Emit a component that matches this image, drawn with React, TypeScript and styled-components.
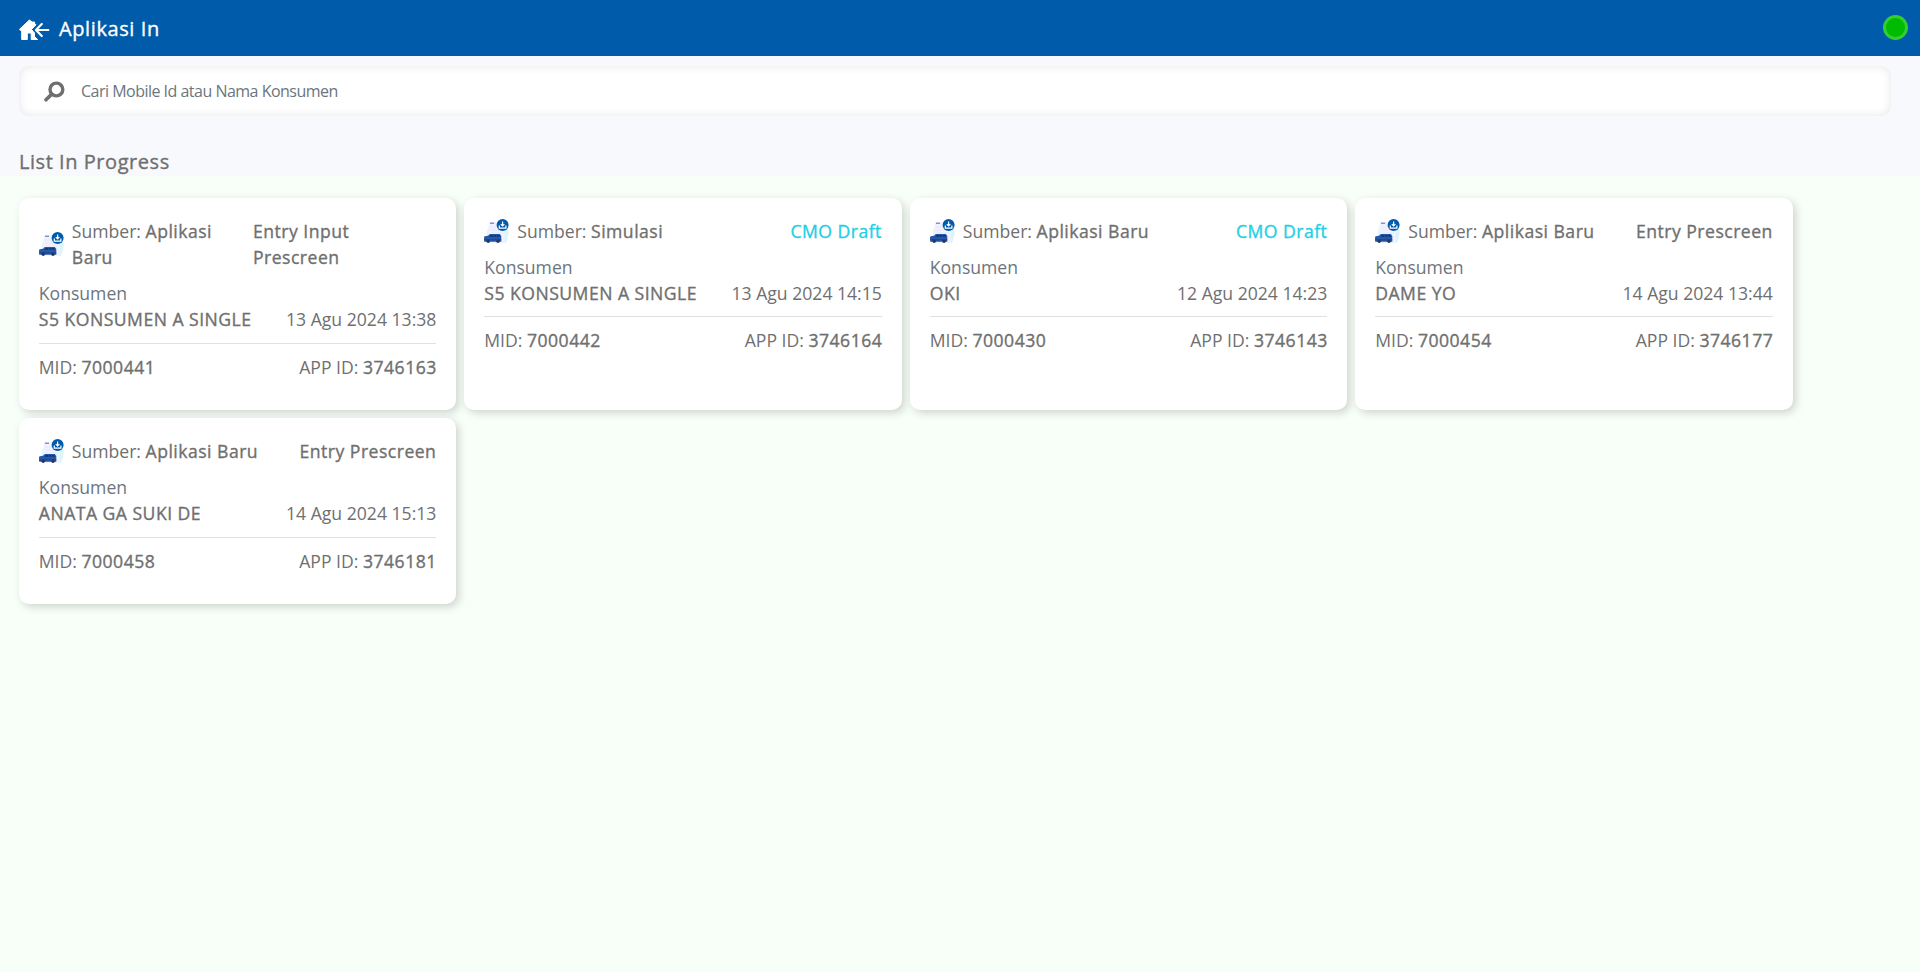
import React from 'react';
import styled, { createGlobalStyle, css } from 'styled-components';

const GlobalStyle = createGlobalStyle`
  *, *::before, *::after { box-sizing: border-box; }
  body {
    margin: 0;
    background: #f8fff8;
    color: #6f6f6f;
    font-family: 'Open Sans', sans-serif;
    font-size: 17.6px;
    line-height: 1.5;
  }
`;

const mediumWeight = css`
  font-weight: 400;
  letter-spacing: 0.48px;
  -webkit-text-stroke: 0.35px currentColor;
`;

const Header = styled.header`
  display: flex;
  align-items: center;
  height: 56px;
  padding: 0 12px 0 19px;
  background: #005bab;
  color: #fff;
`;

const HeaderTitle = styled.h1`
  flex: 1;
  margin: 2px 0 0 9px;
  font-size: 20px;
  line-height: 30px;
  ${mediumWeight}
  letter-spacing: 0.6px;
`;

const StatusDot = styled.span`
  width: 25px;
  height: 25px;
  margin-bottom: 1px;
  border: 3px solid #33cc33;
  border-radius: 50%;
  background: #00bb00;
`;

const TopSection = styled.section`
  height: 120px;
  padding: 10px 29px 0 19px;
  background: #f8f9fc;
`;

const SearchBox = styled.label`
  display: flex;
  align-items: center;
  gap: 16px;
  height: 50px;
  padding-left: 25px;
  border-radius: 10px;
  background: #fff;
  box-shadow: inset 0 0 10px rgba(0, 0, 0, 0.1);
`;

const SearchInput = styled.input`
  flex: 1;
  padding: 0;
  border: 0;
  outline: 0;
  background: transparent;
  color: #6c757d;
  font: 400 16px/24px 'Open Sans', sans-serif;
  letter-spacing: -0.51px;
  &::placeholder { color: #6c757d; opacity: 1; }
`;

const SectionTitle = styled.h2`
  margin: 31px 0 0;
  font-size: 20px;
  line-height: 30px;
  ${mediumWeight}
  letter-spacing: 0.55px;
`;

const CardGrid = styled.main`
  display: grid;
  grid-template-columns: repeat(4, 437.6px);
  gap: 8px 7.9px;
  padding: 22px 18.8px;
`;

const Card = styled.article`
  padding: 20px 20px 30.3px;
  border-radius: 10px;
  background: #fff;
  box-shadow: 3px 3px 8px rgba(0, 0, 0, 0.17);
`;

const Row = styled.div`
  display: flex;
  align-items: center;
  justify-content: space-between;
`;

const Source = styled.div`
  display: flex;
  align-items: center;
  gap: 8px;
`;

const Strong = styled.span`
  ${mediumWeight}
`;

const Status = styled.div<{ $draft: boolean }>`
  ${mediumWeight}
  color: ${({ $draft }) => ($draft ? '#1dd0e6' : 'inherit')};
`;

const Label = styled.div`
  margin-top: 9.2px;
  color: #6c757d;
`;

const Divider = styled.hr`
  margin: 10px 0 9.9px;
  border: 0;
  border-top: 1px solid #dee2e6;
`;

const AppId = styled.span`
  margin-right: -0.4px;
`;

const HomeSvg = styled.svg`
  flex-shrink: 0;
  margin-top: 4px;
`;

const SourceSvg = styled.svg`
  flex-shrink: 0;
`;

const HomeIcon = () => (
  <HomeSvg width="31" height="22" viewBox="0 0 31 22" fill="none">
    <path d="M10.4 1 0.5 10.3 1.4 11.5H2.7V20.5H8.3V14H12.2V20.5H18.6L15.5 17.5V14L12.5 10.5 17 5.7 15.6 4.6V3H13.2Z" fill="#fff" stroke="#fff" strokeWidth="1" strokeLinejoin="round" />
    <path d="M29.3 11H17.8M22.8 5 16.9 11 22.8 17" stroke="#fff" strokeWidth="2.2" strokeLinecap="round" strokeLinejoin="round" />
  </HomeSvg>
);

const SearchIcon = () => (
  <svg width="21" height="21" viewBox="0 0 21 21" fill="none" stroke="#6f6f6f">
    <circle cx="12.4" cy="8.5" r="6.4" strokeWidth="3.4" />
    <path d="M7.5 13.4 2 18.8" strokeWidth="3.6" strokeLinecap="round" />
  </svg>
);

const SourceIcon = () => (
  <SourceSvg width="25" height="25" viewBox="0 0 25 25">
    <path d="M4 9 14 3 24 9Q26 15 22 24H6Q1 17 4 9Z" fill="#dcf5fc" />
    <path d="M5 3H15L20 7 21 24H7L4 16Z" fill="#f1f2ff" />
    <path d="M6 4.2H10" stroke="#315caa" strokeWidth=".9" />
    <path d="M6 8H13M6 11H18M7 14H19" stroke="#e4e5fa" strokeWidth=".8" />
    <path d="M0 18 0.8 17.2 4 16.8 5.8 15H15.8L17.3 17V22.8L0.2 22.8Z" fill="#2558aa" />
    <path d="M5.3 17.7 6.8 15.9H9.4V17.7ZM10.2 15.9H12.4V17.7H10.2ZM13.1 15.9H15.1L16 17.7H13.1Z" fill="#14336d" />
    <path d="M0 20.8H17.3" stroke="#173f87" strokeWidth=".8" />
    <circle cx="4.2" cy="22.2" r="1.7" fill="#263858" />
    <circle cx="14" cy="22.2" r="1.7" fill="#263858" />
    <circle cx="18.6" cy="6.1" r="6" fill="#005bab" />
    <path d="M18.6 2.6V6.8M16.8 5.2 18.6 7 20.4 5.2M15.3 6.4V9.1H21.9V6.4" fill="none" stroke="#fff" strokeWidth="1.2" />
  </SourceSvg>
);

const applications = [
  { source: 'Aplikasi Baru', status: 'Entry Input Prescreen', name: 'S5 KONSUMEN A SINGLE', date: '13 Agu 2024 13:38', mid: '7000441', app: '3746163' },
  { source: 'Simulasi', status: 'CMO Draft', name: 'S5 KONSUMEN A SINGLE', date: '13 Agu 2024 14:15', mid: '7000442', app: '3746164' },
  { source: 'Aplikasi Baru', status: 'CMO Draft', name: 'OKI', date: '12 Agu 2024 14:23', mid: '7000430', app: '3746143' },
  { source: 'Aplikasi Baru', status: 'Entry Prescreen', name: 'DAME YO', date: '14 Agu 2024 13:44', mid: '7000454', app: '3746177' },
  { source: 'Aplikasi Baru', status: 'Entry Prescreen', name: 'ANATA GA SUKI DE', date: '14 Agu 2024 15:13', mid: '7000458', app: '3746181' },
];

export default function App() {
  return (
    <>
      <GlobalStyle />
      <Header>
        <HomeIcon />
        <HeaderTitle>Aplikasi In</HeaderTitle>
        <StatusDot />
      </Header>
      <TopSection>
        <SearchBox>
          <SearchIcon />
          <SearchInput placeholder="Cari Mobile Id atau Nama Konsumen" />
        </SearchBox>
        <SectionTitle>List In Progress</SectionTitle>
      </TopSection>
      <CardGrid>
        {applications.map((item) => (
          <Card key={item.mid}>
            <Row>
              <Source>
                <SourceIcon />
                <div>Sumber: <Strong>{item.source}</Strong></div>
              </Source>
              <Status $draft={item.status === 'CMO Draft'}>{item.status}</Status>
            </Row>
            <Label>Konsumen</Label>
            <Row>
              <Strong>{item.name}</Strong>
              <span>{item.date}</span>
            </Row>
            <Divider />
            <Row>
              <span>MID: <Strong>{item.mid}</Strong></span>
              <AppId>APP ID: <Strong>{item.app}</Strong></AppId>
            </Row>
          </Card>
        ))}
      </CardGrid>
    </>
  );
}
